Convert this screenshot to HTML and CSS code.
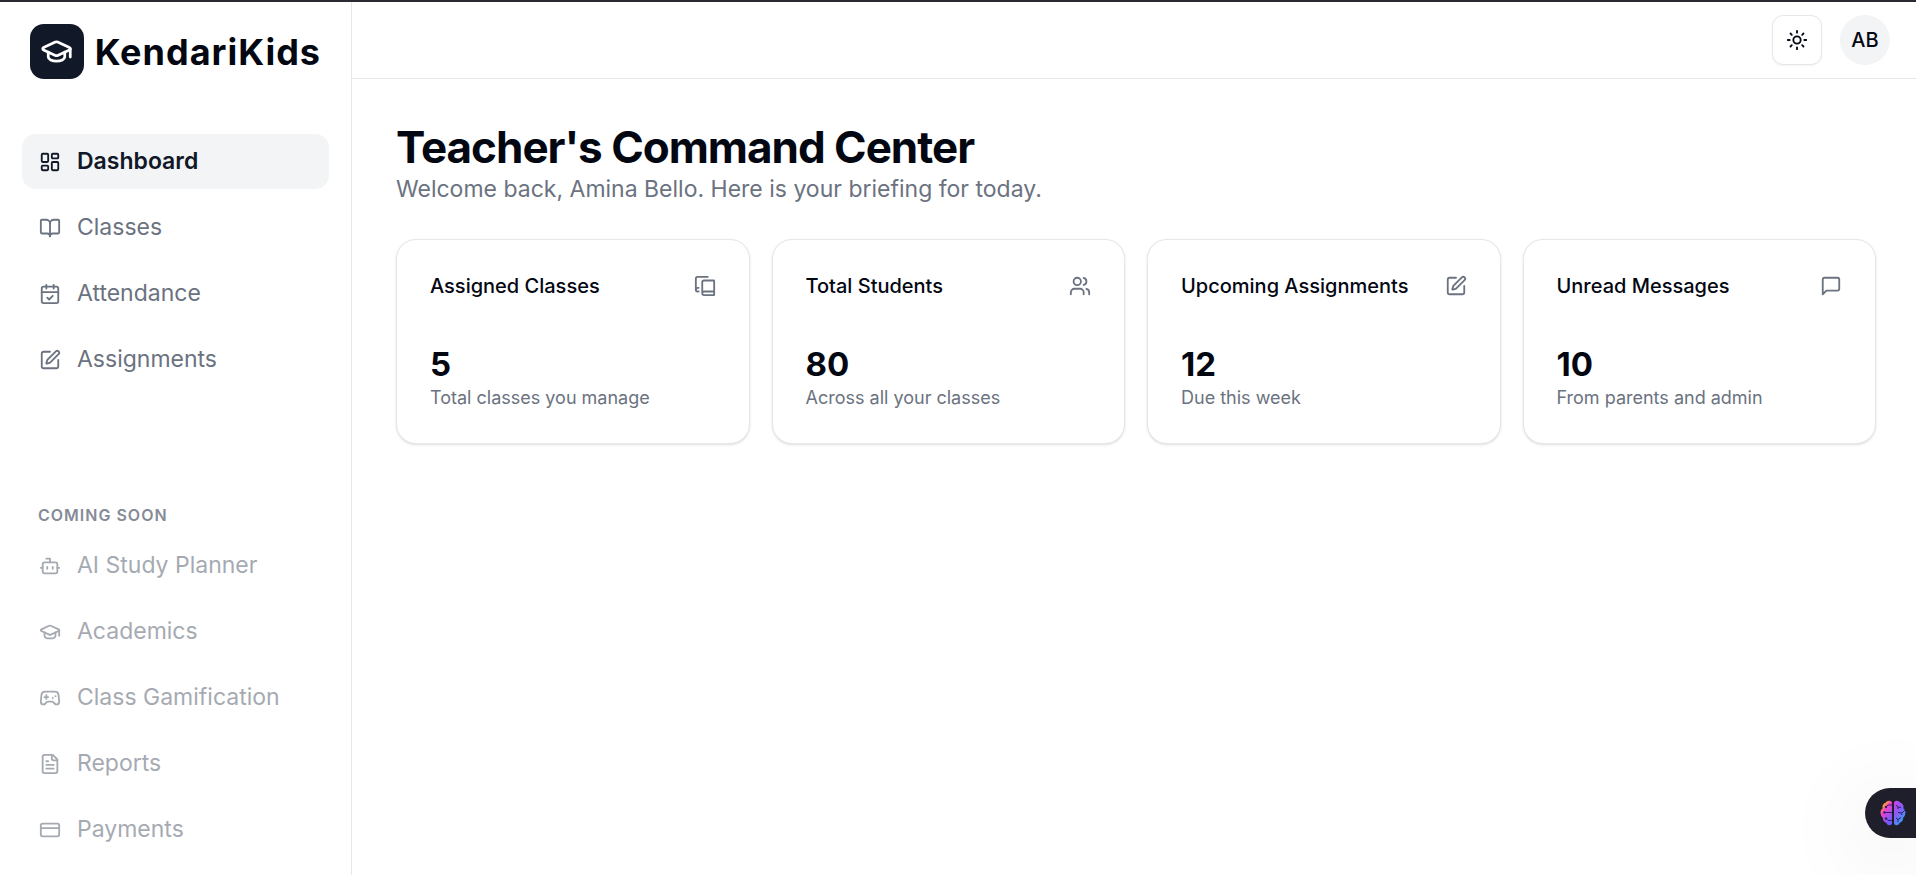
FILE: index.html
```html
<!DOCTYPE html>
<html lang="en">
<head>
<meta charset="utf-8">
<meta name="viewport" content="width=device-width, initial-scale=1">
<title>KendariKids</title>
<link rel="stylesheet" href="styles.css">
</head>
<body>
<svg class="sprite" aria-hidden="true">
  <symbol id="cap" viewBox="0 0 24 24"><path d="M21.42 10.922a1 1 0 0 0-.019-1.838L12.83 5.18a2 2 0 0 0-1.66 0L2.6 9.08a1 1 0 0 0 0 1.832l8.57 3.908a2 2 0 0 0 1.66 0z"/><path d="M22 10v6"/><path d="M6 12.5V16a6 3 0 0 0 12 0v-3.5"/></symbol>
  <symbol id="edit" viewBox="0 0 24 24"><path d="M12 3H5a2 2 0 0 0-2 2v14a2 2 0 0 0 2 2h14a2 2 0 0 0 2-2v-7"/><path d="M18.375 2.625a1 1 0 0 1 3 3l-9.013 9.014a2 2 0 0 1-.853.505l-2.873.84a.5.5 0 0 1-.62-.62l.84-2.873a2 2 0 0 1 .506-.852z"/></symbol>
</svg>
<div class="app">
  <aside class="sidebar">
    <a class="brand" href="#">
      <span class="brand-mark"><svg class="icon icon-lg"><use href="#cap"/></svg></span>
      <span class="brand-name">KendariKids</span>
    </a>
    <nav class="nav" aria-label="Main">
      <a class="nav-item active" href="#" aria-current="page"><svg class="icon" viewBox="0 0 24 24"><rect width="7" height="9" x="3" y="3" rx="1"/><rect width="7" height="5" x="14" y="3" rx="1"/><rect width="7" height="9" x="14" y="12" rx="1"/><rect width="7" height="5" x="3" y="16" rx="1"/></svg>Dashboard</a>
      <a class="nav-item" href="#"><svg class="icon" viewBox="0 0 24 24"><path d="M12 7v14"/><path d="M3 18a1 1 0 0 1-1-1V4a1 1 0 0 1 1-1h5a4 4 0 0 1 4 4 4 4 0 0 1 4-4h5a1 1 0 0 1 1 1v13a1 1 0 0 1-1 1h-6a3 3 0 0 0-3 3 3 3 0 0 0-3-3z"/></svg>Classes</a>
      <a class="nav-item" href="#"><svg class="icon" viewBox="0 0 24 24"><path d="M8 2v4"/><path d="M16 2v4"/><rect width="18" height="18" x="3" y="4" rx="2"/><path d="M3 10h18"/><path d="m9 16 2 2 4-4"/></svg>Attendance</a>
      <a class="nav-item" href="#"><svg class="icon"><use href="#edit"/></svg>Assignments</a>
    </nav>
    <section class="soon">
      <h2 class="soon-title">COMING SOON</h2>
      <div class="nav">
        <a class="nav-item muted"><svg class="icon" viewBox="0 0 24 24"><path d="M12 8V4H8"/><rect width="16" height="12" x="4" y="8" rx="2"/><path d="M2 14h2"/><path d="M20 14h2"/><path d="M15 13v2"/><path d="M9 13v2"/></svg>AI Study Planner</a>
        <a class="nav-item muted"><svg class="icon"><use href="#cap"/></svg>Academics</a>
        <a class="nav-item muted"><svg class="icon" viewBox="0 0 24 24"><path d="M6 11h4"/><path d="M8 9v4"/><path d="M15 12h.01"/><path d="M18 10h.01"/><path d="M17.32 5H6.68a4 4 0 0 0-3.978 3.59c-.006.052-.01.101-.017.152C2.604 9.416 2 14.456 2 16a3 3 0 0 0 3 3c1 0 1.5-.5 2-1l1.414-1.414A2 2 0 0 1 9.828 16h4.344a2 2 0 0 1 1.414.586L17 18c.5.5 1 1 2 1a3 3 0 0 0 3-3c0-1.545-.604-6.584-.685-7.258-.007-.05-.011-.1-.017-.151A4 4 0 0 0 17.32 5z"/></svg>Class Gamification</a>
        <a class="nav-item muted"><svg class="icon" viewBox="0 0 24 24"><path d="M15 2H6a2 2 0 0 0-2 2v16a2 2 0 0 0 2 2h12a2 2 0 0 0 2-2V7Z"/><path d="M14 2v4a2 2 0 0 0 2 2h4"/><path d="M10 9H8"/><path d="M16 13H8"/><path d="M16 17H8"/></svg>Reports</a>
        <a class="nav-item muted"><svg class="icon" viewBox="0 0 24 24"><rect width="20" height="14" x="2" y="5" rx="2"/><path d="M2 10h20"/></svg>Payments</a>
      </div>
    </section>
  </aside>
  <div class="content">
    <header class="topbar">
      <button class="theme" type="button" aria-label="Toggle theme"><svg class="icon" viewBox="0 0 24 24"><circle cx="12" cy="12" r="4"/><path d="M12 2v2"/><path d="M12 20v2"/><path d="m4.93 4.93 1.41 1.41"/><path d="m17.66 17.66 1.41 1.41"/><path d="M2 12h2"/><path d="M20 12h2"/><path d="m6.34 17.66-1.41 1.41"/><path d="m19.07 4.93-1.41 1.41"/></svg></button>
      <button class="avatar" type="button">AB</button>
    </header>
    <main class="main">
      <h1 class="title">Teacher's Command Center</h1>
      <p class="lead">Welcome back, Amina Bello. Here is your briefing for today.</p>
      <div class="cards">
        <article class="card">
          <div class="card-head"><h3 class="card-title">Assigned Classes</h3><svg class="icon" viewBox="0 0 24 24"><path d="M2 16V4a2 2 0 0 1 2-2h11"/><path d="M22 18H11a2 2 0 1 0 0 4h10.5a.5.5 0 0 0 .5-.5v-15a.5.5 0 0 0-.5-.5H11a2 2 0 0 0-2 2v12"/><path d="M5 14H4a2 2 0 1 0 0 4h1"/></svg></div>
          <p class="value">5</p><p class="note">Total classes you manage</p>
        </article>
        <article class="card">
          <div class="card-head"><h3 class="card-title">Total Students</h3><svg class="icon" viewBox="0 0 24 24"><path d="M16 21v-2a4 4 0 0 0-4-4H6a4 4 0 0 0-4 4v2"/><circle cx="9" cy="7" r="4"/><path d="M22 21v-2a4 4 0 0 0-3-3.87"/><path d="M16 3.13a4 4 0 0 1 0 7.75"/></svg></div>
          <p class="value">80</p><p class="note">Across all your classes</p>
        </article>
        <article class="card">
          <div class="card-head"><h3 class="card-title">Upcoming Assignments</h3><svg class="icon"><use href="#edit"/></svg></div>
          <p class="value">12</p><p class="note">Due this week</p>
        </article>
        <article class="card">
          <div class="card-head"><h3 class="card-title">Unread Messages</h3><svg class="icon" viewBox="0 0 24 24"><path d="M21 15a2 2 0 0 1-2 2H7l-4 4V5a2 2 0 0 1 2-2h14a2 2 0 0 1 2 2z"/></svg></div>
          <p class="value">10</p><p class="note">From parents and admin</p>
        </article>
      </div>
    </main>
  </div>
</div>
<button class="assistant" type="button" aria-label="Open assistant">
  <svg class="brain" viewBox="0 0 26 26">
    <defs>
      <linearGradient id="left" x1="0" y1="0" x2=".6" y2="1"><stop offset="0" stop-color="#ffa51f"/><stop offset=".25" stop-color="#ff9a2e"/><stop offset=".45" stop-color="#f43fd0"/><stop offset="1" stop-color="#6a5cff"/></linearGradient>
      <linearGradient id="right" x1="0" y1="0" x2=".6" y2="1"><stop offset="0" stop-color="#d03fe8"/><stop offset=".5" stop-color="#8a5cf6"/><stop offset="1" stop-color="#2aa5f5"/></linearGradient>
    </defs>
    <path fill="url(#left)" d="M12 2.500C11 0 7 .2 5.500 2.800 3 3.500 2 6 2.600 8.400.8 9.500 0 12 .8 14.200c.2 1.600 1 2.800 2 3.400-.2 2.500 1.200 4.600 3.400 5.200C7.500 26 11 26 12 23.500z"/>
    <path fill="url(#right)" d="M14 2.500c1-2.500 5-2.300 6.500.3 2.500.7 3.500 3.200 2.900 5.600 1.800 1.100 2.600 3.600 1.800 5.800-.2 1.600-1 2.800-2 3.400.2 2.500-1.200 4.600-3.400 5.200C18.500 26 15 26 14 23.500z"/>
    <g class="brain-lines"><path d="M12 5H8L6 7M12 12.500H4M12 20.500H8l-2-2M16 5l2 2v2M18 7l3 .5M25 10l-3 3-4-.5M21 13l1 2M16 18l2 1.500V22M18 19.500l3-2"/></g>
    <g class="brain-dots"><circle cx="6" cy="7" r="1.200"/><circle cx="4.500" cy="12.500" r="1.200"/><circle cx="6" cy="18.500" r="1.200"/></g>
  </svg>
</button>
</body>
</html>
```
FILE: styles.css
```css
* { box-sizing: border-box; }
body {
  margin: 0;
  background: #fff;
  color: #030712;
  font-family: Inter, "Open Sans", sans-serif;
}
h1, h2, h3, p { margin: 0; }
a { color: inherit; text-decoration: none; }
button { font: inherit; color: inherit; padding: 0; cursor: pointer; }
.sprite { position: absolute; width: 0; height: 0; }
.icon {
  width: 22px;
  height: 22px;
  flex: none;
  fill: none;
  stroke: currentColor;
  stroke-width: 2;
  stroke-linecap: round;
  stroke-linejoin: round;
}
.icon-lg { width: 33px; height: 33px; }

.app {
  display: flex;
  min-height: 100vh;
  border-top: 2px solid #2b2a33;
}
.sidebar {
  display: flex;
  flex-direction: column;
  flex: none;
  width: 352px;
  padding: 22px 22px 18px;
  border-right: 1px solid #e5e7eb;
}
.brand {
  display: flex;
  align-items: center;
  gap: 11px;
  padding: 0 8px;
  margin-bottom: 55px;
}
.brand-mark {
  display: grid;
  place-items: center;
  width: 55px;
  height: 55px;
  border-radius: 14px;
  background: #111827;
  color: #fff;
}
.brand-name { font-size: 36px; line-height: 44px; font-weight: 700; letter-spacing: 1px; }
.nav { display: flex; flex-direction: column; gap: 11px; }
.nav-item {
  display: flex;
  align-items: center;
  gap: 16px;
  height: 55px;
  padding: 0 17px;
  border-radius: 14px;
  color: #6b7280;
  font-size: 23px;
  line-height: 33px;
}
.active { background: #f3f4f6; color: #111827; font-weight: 600; }
.muted { opacity: 0.6; }
.soon { margin-top: auto; }
.soon-title {
  padding: 0 16px;
  margin-bottom: 12px;
  color: #858b97;
  font-size: 16px;
  line-height: 22px;
  font-weight: 600;
  letter-spacing: 1px;
}

.content { flex: 1; min-width: 0; }
.topbar {
  display: flex;
  justify-content: flex-end;
  align-items: center;
  gap: 18px;
  height: 77px;
  padding: 0 26px;
  border-bottom: 1px solid #e5e7eb;
}
.theme {
  display: grid;
  place-items: center;
  width: 50px;
  height: 50px;
  border: 1px solid #e5e7eb;
  border-radius: 11px;
  background: #fff;
  box-shadow: 0 1px 2px rgba(0, 0, 0, 0.05);
}
.avatar {
  width: 50px;
  height: 50px;
  border: 0;
  border-radius: 50%;
  background: #f3f4f6;
  font-size: 20px;
  font-weight: 500;
}
.main { padding: 43px 40px 44px 44px; }
.title { font-size: 44px; line-height: 50px; font-weight: 700; letter-spacing: -1px; }
.lead { margin-top: 2px; color: #6b7280; font-size: 23px; line-height: 31px; }
.cards {
  display: grid;
  grid-template-columns: repeat(4, 1fr);
  gap: 22px;
  margin-top: 34px;
}
.card {
  padding: 33px;
  border: 1px solid #e5e7eb;
  border-radius: 20px;
  background: #fff;
  box-shadow: 0 1px 3px rgba(0, 0, 0, 0.1), 0 1px 2px -1px rgba(0, 0, 0, 0.1);
}
.card-head {
  display: flex;
  justify-content: space-between;
  align-items: center;
  margin-bottom: 43px;
  color: #6b7280;
}
.card-title { color: #030712; font-size: 20px; line-height: 26px; font-weight: 500; }
.value { font-size: 33px; line-height: 44px; font-weight: 700; }
.note { color: #6b7280; font-size: 18px; line-height: 24px; }

.assistant {
  position: fixed;
  right: 0;
  bottom: 37px;
  display: flex;
  align-items: center;
  width: 51px;
  height: 50px;
  padding-left: 15px;
  border: 0;
  border-radius: 25px 0 0 25px;
  background: #1f1f2b;
  box-shadow: 0 16px 90px rgba(0, 0, 0, 0.13);
}
.brain { width: 26px; height: 26px; }
.brain-lines { fill: none; stroke: #2c2266; stroke-width: 1; }
.brain-dots { fill: #2c2266; }
```
